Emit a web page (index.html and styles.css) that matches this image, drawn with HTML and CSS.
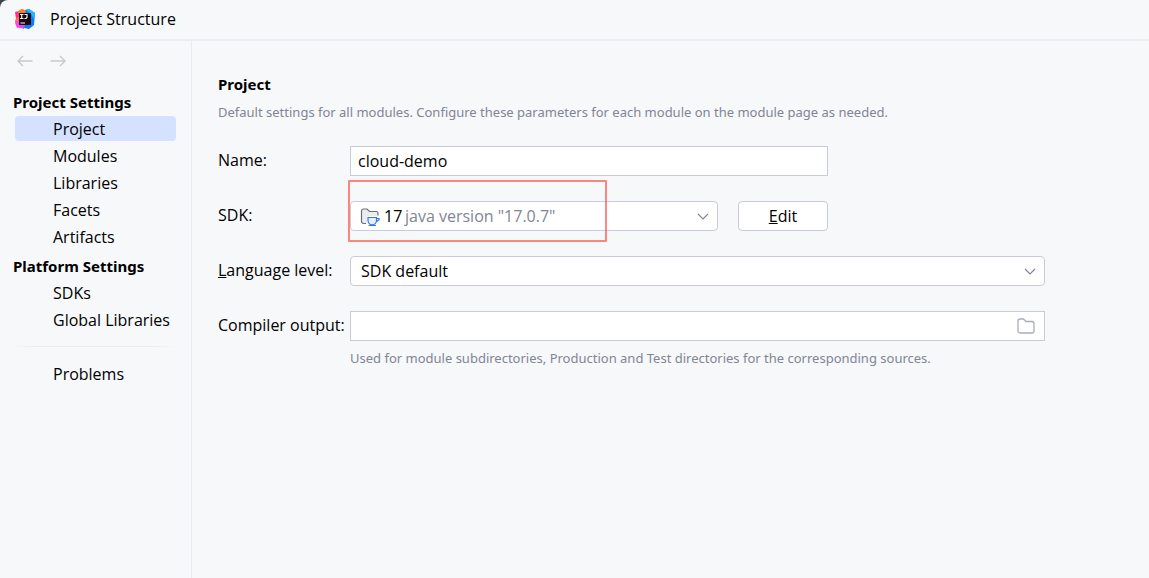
FILE: index.html
```html
<!DOCTYPE html>
<html lang="en">
<head>
<meta charset="utf-8">
<title>Project Structure</title>
<link rel="stylesheet" href="styles.css">
</head>
<body>
<div class="window">
  <header class="titlebar">
    <svg class="logo" viewBox="0 0 20 20" aria-hidden="true">
      <path d="M0 3 4 2 7 0l4 2-2 9-6 3-2-4z" fill="#ff318c"/>
      <path d="M0 11 5 6l6 7-5 6-5-2z" fill="#fc801d"/>
      <path d="M0 13l4-3 2 8-4 1z" fill="#ff45ed"/>
      <path d="M10 1 14 0l6 4-1 12-5 4-9-2 5-6z" fill="#087cfa"/>
      <path d="M11 1l3-1 6 4-1 6-3-5z" fill="#21b8ff"/>
      <path d="M3 2 7 0l4 2-1 2H3z" fill="#fc801d"/>
      <path d="M4 16h6l-1 4-6-2z" fill="#d74af7"/>
      <path d="M4 4h12v12H4z" fill="#160b10"/>
      <path d="M5 5.500h3.500M5 9.500h3.500M6.750 5.500v4M9.500 5.500h2.500v3l-1 1H9.500M5.500 14h4.500" fill="none" stroke="#fff" stroke-width="1.100"/>
    </svg>
    <h1 class="title">Project Structure</h1>
  </header>
  <div class="body">
    <aside class="sidebar">
      <div class="history">
        <button class="arrow" type="button" aria-label="Back" disabled><svg viewBox="0 0 16 12"><path d="M15.500 6H1M6 1 1 6l5 5"/></svg></button>
        <button class="arrow" type="button" aria-label="Forward" disabled><svg viewBox="0 0 16 12"><path d="M.5 6H15M10 1l5 5-5 5"/></svg></button>
      </div>
      <nav class="nav">
        <h2 class="group">Project Settings</h2>
        <a class="item selected" href="#project" aria-current="page">Project</a>
        <a class="item" href="#modules">Modules</a>
        <a class="item" href="#libraries">Libraries</a>
        <a class="item" href="#facets">Facets</a>
        <a class="item" href="#artifacts">Artifacts</a>
        <h2 class="group">Platform Settings</h2>
        <a class="item" href="#sdks">SDKs</a>
        <a class="item" href="#global">Global Libraries</a>
        <hr class="divider">
        <a class="item" href="#problems">Problems</a>
      </nav>
    </aside>
    <main class="content" id="project">
      <h2 class="heading">Project</h2>
      <p class="note">Default settings for all modules. Configure these parameters for each module on the module page as needed.</p>
      <form class="form">
        <label class="label" for="name">Name:</label>
        <input class="control medium" id="name" type="text" value="cloud-demo">
        <label class="label" for="sdk">SDK:</label>
        <div class="field">
          <select class="control combo sdk" id="sdk"><option>17</option></select>
          <svg class="sdk-icon" viewBox="0 0 20 20" aria-hidden="true">
            <path d="M7 16.500H3.500a2 2 0 0 1-2-2V4a2 2 0 0 1 2-2H7l2.500 2.500H16a2 2 0 0 1 2 2V9H7z" fill="#ebecf0"/>
            <path d="M6 16.500H3.500a2 2 0 0 1-2-2V4a2 2 0 0 1 2-2H7l2.500 2.500H16a2 2 0 0 1 2 2V8.500" fill="none" stroke="#6c707e" stroke-width="1.200"/>
            <path d="M8 10.500h8.500v3a4 4 0 0 1-8.500 0zM16.500 11.500H19v1.500l-2.500 1.500M8.500 18.500h7.500" fill="#e7effd" stroke="#3574f0" stroke-width="1.200"/>
          </svg>
          <span class="version">java version "17.0.7"</span>
          <svg class="chevron" viewBox="0 0 12 8" aria-hidden="true"><path d="M1 1l5 5 5-5"/></svg>
          <div class="highlight"></div>
        </div>
        <button class="control edit" type="button"><u>E</u>dit</button>
        <label class="label" for="level"><u>L</u>anguage level:</label>
        <div class="field wide">
          <select class="control combo" id="level"><option>SDK default</option></select>
          <svg class="chevron" viewBox="0 0 12 8" aria-hidden="true"><path d="M1 1l5 5 5-5"/></svg>
        </div>
        <label class="label" for="output">Compiler output:</label>
        <div class="field wide">
          <input class="control" id="output" type="text">
          <button class="browse" type="button" aria-label="Browse"><svg viewBox="0 0 18 16"><path d="M1 13V3a2 2 0 0 1 2-2h3.500L9 3.500h6a2 2 0 0 1 2 2V13a2 2 0 0 1-2 2H3a2 2 0 0 1-2-2z"/></svg></button>
        </div>
        <p class="note hint">Used for module subdirectories, Production and Test directories for the corresponding sources.</p>
      </form>
    </main>
  </div>
</div>
</body>
</html>
```
FILE: styles.css
```css
* { box-sizing: border-box; }
body {
  margin: 0;
  background: #3c4452;
  color: #000;
  font: 16px/20px "Open Sans", "Noto Sans", sans-serif;
}
h1, h2, p { margin: 0; font-size: inherit; }
svg { display: block; }
button, input, select { font: inherit; color: inherit; }
.window {
  display: flex;
  flex-direction: column;
  min-height: 100vh;
  background: #f7f8fa;
  border-top-left-radius: 8px;
}
.titlebar {
  display: flex;
  align-items: center;
  gap: 15px;
  height: 41px;
  padding: 0 15px 2px;
  border-bottom: 2px solid #ebecf0;
}
.logo { width: 20px; height: 20px; }
.title { font-weight: 400; }
.body { display: flex; flex: 1; }
.sidebar {
  flex: 0 0 192px;
  border-right: 1px solid #ebecf0;
}
.history {
  display: flex;
  gap: 17px;
  padding: 14px 17px;
}
.arrow { padding: 0; border: 0; background: none; }
.arrow svg {
  width: 16px;
  height: 12px;
  fill: none;
  stroke: #c9c9cc;
  stroke-width: 1.4;
}
.nav {
  display: flex;
  flex-direction: column;
  padding: 7px 15px 0 13px;
}
.group, .heading {
  font-family: "Noto Sans", sans-serif;
  font-size: 15px;
  font-weight: 700;
}
.group { padding-top: 2px; line-height: 25px; }
.item {
  margin: 1px 0 1px 2px;
  padding: 2px 0 0 38px;
  line-height: 23px;
  border-radius: 4px;
  color: inherit;
  text-decoration: none;
}
.item + .group { margin-top: 2px; }
.selected { background: #d4e2ff; }
.divider {
  width: 100%;
  height: 1px;
  margin: 13px 0;
  border: 0;
  background: linear-gradient(90deg, transparent, #ebecf0 15%, #ebecf0 85%, transparent);
}
.content { flex: 1; min-width: 0; padding: 33px 104px 0 26px; }
.note {
  color: #818594;
  font-family: "Noto Sans", sans-serif;
  font-size: 13px;
}
.content > .note { margin-top: 8px; }
.form {
  display: grid;
  grid-template-columns: 132px minmax(0, 1fr) 110px 217px;
  row-gap: 25px;
  margin-top: 24px;
}
.label { grid-column: 1; line-height: 28px; white-space: nowrap; }
.control {
  width: 100%;
  height: 30px;
  padding: 0 7px;
  border: 1px solid #c9ccd6;
  border-radius: 0;
  background: #fff;
}
.medium { grid-column: 2 / 4; }
.field { position: relative; grid-column: 2; }
.wide { grid-column: 2 / 5; }
.combo { padding: 0 10px; border-radius: 4px; appearance: none; }
.sdk { padding-left: 33px; }
.sdk-icon {
  position: absolute;
  top: 6px;
  left: 10px;
  width: 20px;
  height: 20px;
}
.version {
  position: absolute;
  top: 5px;
  left: 55px;
  color: #818594;
  pointer-events: none;
}
.chevron {
  position: absolute;
  top: 12px;
  right: 9px;
  width: 12px;
  height: 8px;
  fill: none;
  stroke: #818594;
  stroke-width: 1.2;
  pointer-events: none;
}
.highlight {
  position: absolute;
  top: -21px;
  left: -2px;
  width: 259px;
  height: 62px;
  border: 2px solid #ff4b40a8;
  border-radius: 1px;
  pointer-events: none;
}
.edit {
  grid-column: 3;
  justify-self: end;
  width: 90px;
  border-radius: 4px;
}
.browse {
  position: absolute;
  top: 7px;
  right: 10px;
  padding: 0;
  border: 0;
  background: none;
}
.browse svg {
  width: 18px;
  height: 16px;
  fill: none;
  stroke: #a8adbd;
  stroke-width: 1.3;
}
.hint { grid-column: 2 / 5; margin-top: -18px; }
```
